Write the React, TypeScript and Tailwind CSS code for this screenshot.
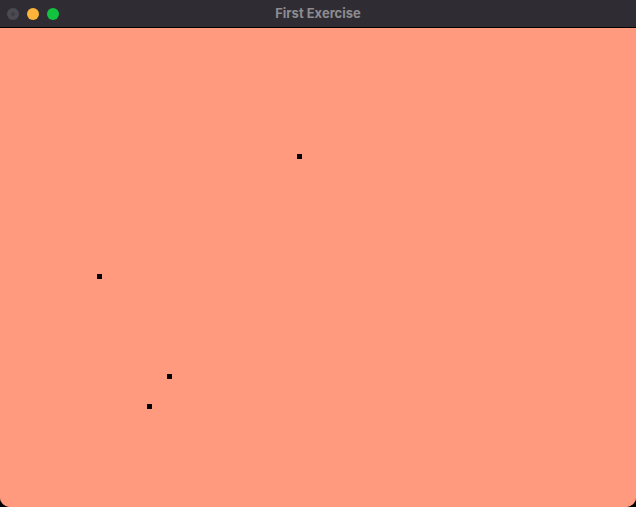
const points = [
  { x: 297, y: 126 },
  { x: 97, y: 246 },
  { x: 167, y: 346 },
  { x: 147, y: 376 },
];

const App = () => {
  return (
    <div className="w-[636px] h-[507px] bg-black">
      <div className="w-full h-full flex flex-col rounded-b-[10px] overflow-hidden bg-[#ff9a7e]">
        <div className="relative h-[28px] bg-[#2f2d33] border-b border-black flex items-center px-[7px] gap-[8px] shrink-0">
          <div className="w-[12px] h-[12px] rounded-full bg-[#4b4a50] flex items-center justify-center">
            <div className="w-[4px] h-[4px] rounded-full bg-[#3e3d43]" />
          </div>
          <div className="w-[12px] h-[12px] rounded-full bg-[#fdb43a]" />
          <div className="w-[12px] h-[12px] rounded-full bg-[#12c33f]" />
          <div className="absolute inset-0 flex items-center justify-center pointer-events-none">
            <span
              className="text-[13px] font-bold text-[#8c8b90]"
              style={{ fontFamily: "Inter, 'Liberation Sans', sans-serif" }}
            >
              First Exercise
            </span>
          </div>
        </div>
        <div className="relative flex-1 bg-[#ff9a7e]">
          {points.map((p, i) => (
            <div
              key={i}
              className="absolute w-[5px] h-[5px] bg-black"
              style={{ left: p.x, top: p.y }}
            />
          ))}
        </div>
      </div>
    </div>
  );
};

export default App;
